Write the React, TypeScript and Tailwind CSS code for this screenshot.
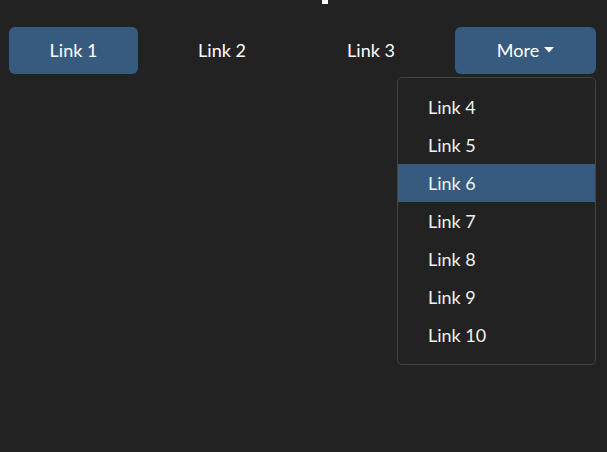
const items = ["Link 4", "Link 5", "Link 6", "Link 7", "Link 8", "Link 9", "Link 10"];

export default function App() {
  return (
    <div
      className="min-h-[452px] w-[607px] bg-[#222222] text-white"
      style={{ fontFamily: "Lato, 'Noto Sans', sans-serif" }}
    >
      {/* bottom of a heading cut off by the viewport */}
      <div className="flex h-[27px] justify-start pl-[322px]">
        <div className="h-[4px] w-[6px] bg-white" />
      </div>

      <nav className="flex gap-[19px] pl-[9px] text-[18px]">
        <a className="flex h-[47px] w-[129px] items-center justify-center rounded-[6px] bg-[#375a7f]">
          Link 1
        </a>
        <a className="flex h-[47px] w-[130px] items-center justify-center">Link 2</a>
        <a className="flex h-[47px] w-[130px] items-center justify-center">Link 3</a>
        <div className="relative">
          <button className="flex h-[47px] w-[141px] items-center justify-center rounded-[6px] bg-[#375a7f]">
            More
            <svg width="10" height="6" viewBox="0 0 10 6" className="ml-[5px] mt-[-2px]">
              <path d="M0 0h10L5 5.5z" fill="#ffffff" />
            </svg>
          </button>
          <ul className="absolute right-0 top-[50px] w-[199px] rounded-[5px] border border-[#444444] bg-[#222222] py-[10px]">
            {items.map((item) => (
              <li
                key={item}
                className={`flex h-[38px] items-center pl-[30px] text-[#f0f0f0] ${
                  item === "Link 6" ? "bg-[#375a7f]" : ""
                }`}
              >
                {item}
              </li>
            ))}
          </ul>
        </div>
      </nav>
    </div>
  );
}
